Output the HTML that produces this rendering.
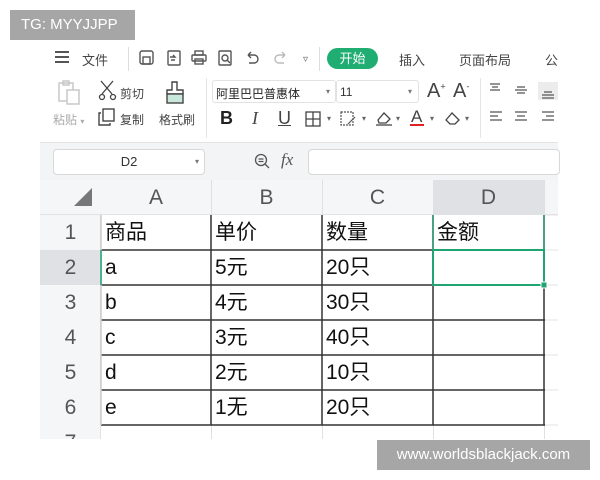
<!DOCTYPE html>
<html><head><meta charset="utf-8"><style>
*{margin:0;padding:0;box-sizing:border-box}
body{width:600px;height:480px;background:#fff;position:relative;overflow:hidden;font-family:"Liberation Sans","Noto Sans CJK SC",sans-serif;color:#333}
.a{position:absolute;white-space:nowrap}
.t{font-size:12px;color:#444}
.g{color:#aaa}
svg{position:absolute;overflow:visible}
.cell{position:absolute;font-size:21px;color:#111;line-height:35px;padding-left:4px}
.hd{position:absolute;font-size:21px;color:#555;text-align:center;line-height:35px}
</style></head><body>
<div class="a" style="left:40px;top:38px;width:518px;height:402px;background:#fff"></div>
<div class="a" style="left:55px;top:51px;width:14px;height:2px;background:#555;box-shadow:0 5px 0 #555,0 10px 0 #555"></div>
<div class="a t" style="left:82px;top:50px;font-size:13px">文件</div>
<div class="a" style="left:128px;top:47px;width:1px;height:24px;background:#ddd"></div>
<svg style="left:139px;top:50px" width="16" height="16" fill="none" stroke="#555" stroke-width="1.4"><rect x="1" y="1" width="13" height="13" rx="2"/><rect x="4" y="7" width="7" height="7"/></svg>
<svg style="left:166px;top:50px" width="16" height="16" fill="none" stroke="#555" stroke-width="1.4"><rect x="2" y="1" width="12" height="14" rx="1"/><path d="M4 7h5l-2-2M9 10H5"/></svg>
<svg style="left:191px;top:50px" width="16" height="16" fill="none" stroke="#555" stroke-width="1.4"><rect x="4" y="1" width="8" height="4"/><rect x="1" y="5" width="14" height="6" rx="1"/><rect x="4" y="9" width="8" height="5"/></svg>
<svg style="left:218px;top:50px" width="16" height="16" fill="none" stroke="#555" stroke-width="1.4"><rect x="1" y="1" width="12" height="14" rx="1"/><circle cx="7" cy="8" r="3"/><path d="M9 10l3 3"/></svg>
<svg style="left:245px;top:50px" width="16" height="16" fill="none" stroke="#555" stroke-width="1.4"><path d="M3 5h6a4 4 0 010 8H4M3 5l3-3M3 5l3 3"/></svg>
<svg style="left:272px;top:50px" width="16" height="16" fill="none" stroke="#bbb" stroke-width="1.4"><path d="M13 5H7a4 4 0 000 8h5M13 5l-3-3M13 5l-3 3"/></svg>
<div class="a" style="left:303px;top:54px;font-size:10px;color:#666">▿</div>
<div class="a" style="left:319px;top:47px;width:1px;height:24px;background:#ddd"></div>
<div class="a" style="left:327px;top:48px;width:51px;height:21px;border-radius:11px;background:#1fad72;color:#fff;font-size:13px;text-align:center;line-height:21px">开始</div>
<div class="a t" style="left:399px;top:50px;font-size:13px">插入</div>
<div class="a t" style="left:459px;top:50px;font-size:13px">页面布局</div>
<div class="a t" style="left:545px;top:50px;font-size:13px">公</div>
<svg style="left:58px;top:80px" width="26" height="26" fill="none" stroke="#c8c8c8" stroke-width="1.5"><rect x="1" y="3" width="14" height="18"/><rect x="5" y="1" width="6" height="4"/><rect x="9" y="10" width="12" height="14" fill="#fff"/></svg>
<div class="a g" style="left:53px;top:111px;font-size:12px">粘贴 <span style="font-size:8px">▾</span></div>
<svg style="left:98px;top:80px" width="20" height="20" fill="none" stroke="#444" stroke-width="1.3"><path d="M3 1l11 13M15 1L4 14"/><circle cx="4" cy="17" r="2.5"/><circle cx="15" cy="17" r="2.5"/></svg>
<div class="a t" style="left:120px;top:85px">剪切</div>
<svg style="left:98px;top:108px" width="18" height="18" fill="none" stroke="#444" stroke-width="1.4"><rect x="5" y="1" width="11" height="12"/><path d="M3 5H1v12h11v-2"/></svg>
<div class="a t" style="left:120px;top:111px">复制</div>
<svg style="left:164px;top:81px" width="22" height="24" fill="none" stroke="#444" stroke-width="1.4"><path d="M8 1h5v8h6v4H3V9h5z"/><rect x="3" y="13" width="16" height="9" fill="#c8e8dc"/></svg>
<div class="a t" style="left:159px;top:111px">格式刷</div>
<div class="a" style="left:206px;top:78px;width:1px;height:60px;background:#e5e5e5"></div>
<div class="a" style="left:212px;top:80px;width:124px;height:23px;border:1px solid #e2e2e2;border-radius:3px;font-size:12px;color:#222;padding:4px 3px">阿里巴巴普惠体<span style="position:absolute;left:113px;font-size:8px;color:#777;top:6px">▾</span></div>
<div class="a" style="left:336px;top:80px;width:83px;height:23px;border:1px solid #e2e2e2;border-radius:3px;font-size:12px;color:#333;padding:4px 3px">11<span style="position:absolute;left:71px;font-size:8px;color:#777;top:6px">▾</span></div>
<div class="a" style="left:427px;top:80px;font-size:20px;color:#444">A<sup style="font-size:9px">+</sup></div>
<div class="a" style="left:453px;top:80px;font-size:20px;color:#444">A<sup style="font-size:9px">-</sup></div>
<div class="a" style="left:220px;top:108px;font-size:18px;font-weight:bold;color:#222">B</div>
<div class="a" style="left:252px;top:108px;font-size:18px;font-style:italic;font-family:'Liberation Serif',serif;color:#444">I</div>
<div class="a" style="left:278px;top:108px;font-size:18px;color:#444;text-decoration:underline">U</div>
<svg style="left:305px;top:111px" width="16" height="16" fill="none" stroke="#444" stroke-width="1.3"><rect x="1" y="1" width="14" height="14"/><path d="M8 1v14M1 8h14"/></svg>
<div class="a" style="left:327px;top:114px;font-size:8px;color:#666">▾</div>
<svg style="left:340px;top:111px" width="17" height="16" fill="none" stroke="#555" stroke-width="1.2"><rect x="1" y="1" width="12" height="13" stroke-dasharray="2 1"/><path d="M8 13l7-7"/></svg>
<div class="a" style="left:362px;top:114px;font-size:8px;color:#666">▾</div>
<svg style="left:375px;top:110px" width="18" height="18" fill="none" stroke="#444" stroke-width="1.3"><path d="M3 10l6-7 6 6-4 4H4z"/><path d="M1 15h16"/></svg>
<div class="a" style="left:396px;top:114px;font-size:8px;color:#666">▾</div>
<div class="a" style="left:411px;top:107px;font-size:17px;color:#444">A</div>
<div class="a" style="left:410px;top:124px;width:14px;height:2px;background:#d22"></div>
<div class="a" style="left:430px;top:114px;font-size:8px;color:#666">▾</div>
<svg style="left:444px;top:110px" width="18" height="16" fill="none" stroke="#444" stroke-width="1.3"><path d="M2 10l6-7 7 7-4 4H6z"/></svg>
<div class="a" style="left:465px;top:114px;font-size:8px;color:#666">▾</div>
<div class="a" style="left:480px;top:78px;width:1px;height:60px;background:#e5e5e5"></div>
<svg style="left:488px;top:82px" width="70" height="50" fill="none" stroke="#555" stroke-width="1.2">
<path d="M2 2h10M4 5h6M2 8h10"/>
<path d="M27 8h12M29 5h8M29 11h8"/>
<rect x="50" y="0" width="20" height="18" fill="#ececec" stroke="none"/>
<path d="M54 13h12M56 10h8M54 16h12"/>
<path d="M2 30h12M2 34h8M2 38h12"/>
<path d="M27 30h12M29 34h8M27 38h12"/>
<path d="M54 30h12M58 34h8M54 38h12"/>
</svg>
<div class="a" style="left:40px;top:142px;width:518px;height:38px;background:#f3f4f6;border-top:1px solid #e3e3e3"></div>
<div class="a" style="left:53px;top:149px;width:152px;height:26px;background:#fff;border:1px solid #d8d8d8;border-radius:4px;font-size:13px;color:#333;text-align:center;line-height:24px">D2<span style="position:absolute;right:5px;font-size:8px;color:#777">▾</span></div>
<svg style="left:254px;top:153px" width="16" height="16" fill="none" stroke="#555" stroke-width="1.3"><circle cx="7" cy="7" r="5.5"/><path d="M4.5 6h5M4.5 8.5h5M11 11l4 4"/></svg>
<div class="a" style="left:281px;top:150px;font-size:17px;font-style:italic;font-family:'Liberation Serif',serif;color:#555">fx</div>
<div class="a" style="left:308px;top:149px;width:252px;height:26px;background:#fff;border:1px solid #d8d8d8;border-radius:4px"></div>
<div class="a" style="left:40px;top:180px;width:518px;height:35px;background:#f5f6f7;border-bottom:1px solid #e3e3e3"></div>
<div class="a" style="left:40px;top:215px;width:61px;height:224px;background:#f5f6f7;border-right:1px solid #e3e3e3"></div>
<div class="a" style="left:433px;top:180px;width:111px;height:35px;background:#dfe1e5"></div>
<div class="a" style="left:40px;top:250px;width:61px;height:35px;background:#dfe1e5"></div>
<svg style="left:72px;top:186px" width="22" height="22"><path d="M20 2V20H2z" fill="#777"/></svg>
<div class="hd" style="left:101px;top:180px;width:110px">A</div>
<div class="hd" style="left:211px;top:180px;width:111px">B</div>
<div class="hd" style="left:322px;top:180px;width:111px">C</div>
<div class="hd" style="left:433px;top:180px;width:111px">D</div>
<div class="hd" style="left:40px;top:215px;width:61px">1</div>
<div class="hd" style="left:40px;top:250px;width:61px">2</div>
<div class="hd" style="left:40px;top:285px;width:61px">3</div>
<div class="hd" style="left:40px;top:320px;width:61px">4</div>
<div class="hd" style="left:40px;top:355px;width:61px">5</div>
<div class="hd" style="left:40px;top:390px;width:61px">6</div>
<div class="hd" style="left:40px;top:425px;width:61px;height:14px;overflow:hidden">7</div>
<div class="a" style="left:211px;top:180px;width:1px;height:35px;background:#e0e0e0"></div>
<div class="a" style="left:322px;top:180px;width:1px;height:35px;background:#e0e0e0"></div>
<div class="a" style="left:433px;top:180px;width:1px;height:35px;background:#e0e0e0"></div>
<div class="a" style="left:544px;top:180px;width:1px;height:35px;background:#e0e0e0"></div>
<div class="a" style="left:211px;top:425px;width:1px;height:14px;background:#e0e0e0"></div>
<div class="a" style="left:322px;top:425px;width:1px;height:14px;background:#e0e0e0"></div>
<div class="a" style="left:433px;top:425px;width:1px;height:14px;background:#e0e0e0"></div>
<div class="a" style="left:544px;top:425px;width:1px;height:14px;background:#e0e0e0"></div>
<svg style="left:0;top:0" width="600" height="480" fill="none" stroke="#333" stroke-width="1.5">
<path d="M545 250H558M545 285H558M545 320H558M545 355H558M545 390H558M545 425H558M545 215H558" stroke="#e3e3e3" stroke-width="1"/>
<path d="M101 250H545M101 285H545M101 320H545M101 355H545M101 390H545M101 425H545"/>
<path d="M211 215V425M322 215V425M433 215V425M544 215V425"/>
<path d="M101 215V425" stroke="#ccc"/>
<rect x="433" y="250" width="111" height="35" stroke="#1fa572" stroke-width="2"/>
<path d="M433 215V250H544V215" stroke="#1fa572" stroke-width="1.2"/>
<rect x="541" y="282" width="6" height="6" fill="#1fa572" stroke="#fff" stroke-width="1"/>
<path d="M101 250V285" stroke="#1fa572" stroke-width="1.5"/>
</svg>
<div class="cell" style="left:101px;top:215px">商品</div>
<div class="cell" style="left:211px;top:215px">单价</div>
<div class="cell" style="left:322px;top:215px">数量</div>
<div class="cell" style="left:433px;top:215px">金额</div>
<div class="cell" style="left:101px;top:250px">a</div><div class="cell" style="left:211px;top:250px">5元</div><div class="cell" style="left:322px;top:250px">20只</div>
<div class="cell" style="left:101px;top:285px">b</div><div class="cell" style="left:211px;top:285px">4元</div><div class="cell" style="left:322px;top:285px">30只</div>
<div class="cell" style="left:101px;top:320px">c</div><div class="cell" style="left:211px;top:320px">3元</div><div class="cell" style="left:322px;top:320px">40只</div>
<div class="cell" style="left:101px;top:355px">d</div><div class="cell" style="left:211px;top:355px">2元</div><div class="cell" style="left:322px;top:355px">10只</div>
<div class="cell" style="left:101px;top:390px">e</div><div class="cell" style="left:211px;top:390px">1无</div><div class="cell" style="left:322px;top:390px">20只</div>
<div class="a" style="left:10px;top:10px;width:125px;height:30px;background:#a6a6a6;color:#fff;font-size:15px;line-height:30px;padding-left:11px">TG: MYYJJPP</div>
<div class="a" style="left:377px;top:440px;width:213px;height:30px;background:#a6a6a6;color:#fff;font-size:15px;line-height:30px;text-align:center">www.worldsblackjack.com</div>
</body></html>
